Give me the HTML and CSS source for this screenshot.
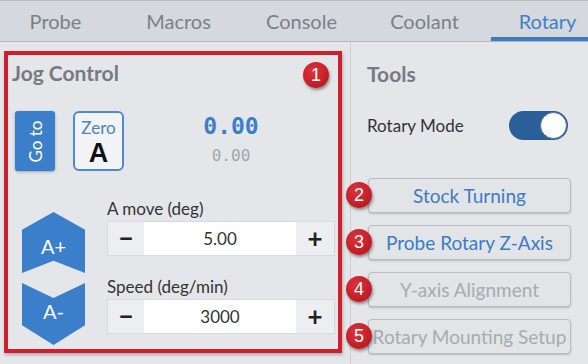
FILE: index.html
```html
<!DOCTYPE html>
<html lang="en">
<head>
  <meta charset="UTF-8">
  <title>Rotary</title>
  <link rel="stylesheet" href="styles.css">
</head>
<body>
  <div class="tabs">
    <div class="tab">Probe</div>
    <div class="tab">Macros</div>
    <div class="tab">Console</div>
    <div class="tab">Coolant</div>
    <div class="tab active">Rotary</div>
  </div>

  <div class="main">
    <div class="jog">
      <span class="badge badge-1">1</span>
      <div class="panel-title">Jog Control</div>

      <div class="jog-top">
        <button class="goto-btn"><span>Go to</span></button>
        <button class="zero-btn">
          <span class="zero-label">Zero</span>
          <span class="zero-axis">A</span>
        </button>
        <div class="readout">
          <div class="readout-main">0.00</div>
          <div class="readout-sub">0.00</div>
        </div>
      </div>

      <div class="jog-bottom">
        <div class="jog-arrows">
          <button class="arrow arrow-up">A+</button>
          <button class="arrow arrow-down">A-</button>
        </div>
        <div class="jog-fields">
          <label class="field-label">A move (deg)</label>
          <div class="stepper">
            <span class="step">&minus;</span>
            <span class="step-value">5.00</span>
            <span class="step plus">+</span>
          </div>
          <label class="field-label second">Speed (deg/min)</label>
          <div class="stepper">
            <span class="step">&minus;</span>
            <span class="step-value">3000</span>
            <span class="step plus">+</span>
          </div>
        </div>
      </div>
    </div>

    <div class="divider"></div>

    <div class="tools">
      <div class="panel-title">Tools</div>
      <div class="mode-row">
        <span>Rotary Mode</span>
        <span class="toggle"><span class="knob"></span></span>
      </div>
      <div class="tool-list">
        <div class="tool-row">
          <span class="badge">2</span>
          <button class="tool-btn">Stock Turning</button>
        </div>
        <div class="tool-row">
          <span class="badge">3</span>
          <button class="tool-btn">Probe Rotary Z-Axis</button>
        </div>
        <div class="tool-row">
          <span class="badge">4</span>
          <button class="tool-btn disabled">Y-axis Alignment</button>
        </div>
        <div class="tool-row">
          <span class="badge">5</span>
          <button class="tool-btn disabled">Rotary Mounting Setup</button>
        </div>
      </div>
    </div>
  </div>
</body>
</html>
```

FILE: styles.css
```css
* {
  box-sizing: border-box;
}
body {
  margin: 0;
  width: 588px;
  height: 364px;
  overflow: hidden;
  font-family: Lato, "Open Sans", sans-serif;
  background: #e4e6ea;
  color: #333;
}
button {
  font-family: inherit;
  border: none;
  padding: 0;
  cursor: pointer;
}

/* tabs */
.tabs {
  display: flex;
  height: 42px;
  background: #d5d8dd;
  border-top: 1px solid #b9bdc3;
  border-bottom: 1px solid #b3b7bd;
}
.tab {
  flex: 0 0 123px;
  line-height: 40px;
  text-align: center;
  font-size: 20px;
  color: #7c8087;
  position: relative;
}
.tab:first-child {
  margin-left: -6px;
}
.tab.active {
  color: #3f80c6;
}
.tab.active::after {
  content: "";
  position: absolute;
  left: 5px;
  right: 0;
  bottom: 0;
  height: 4px;
  background: #3a7dc4;
}

.main {
  display: flex;
  height: 322px;
}

/* jog control */
.jog {
  position: relative;
  width: 338px;
  height: 302px;
  margin: 9px 0 0 4px;
  border: 4px solid #cf1f2a;
  box-shadow: 1px 2px 3px rgba(0,0,0,0.25);
  padding: 6px 0 0 4px;
}
.panel-title {
  font-size: 21px;
  font-weight: bold;
  line-height: 24px;
  color: #777b81;
}
.jog-top {
  display: flex;
  align-items: flex-start;
  margin: 26px 0 0 3px;
}
.goto-btn {
  width: 40px;
  height: 60px;
  background: #3b7fca;
  color: #fff;
  border-radius: 3px;
  box-shadow: 0 1px 3px rgba(0,0,0,0.3);
  display: flex;
  align-items: center;
  justify-content: center;
}
.goto-btn span {
  display: block;
  transform: rotate(-90deg);
  white-space: nowrap;
  font-size: 17px;
}
.zero-btn {
  width: 51px;
  height: 60px;
  margin-left: 18px;
  border: 2px solid #4a8bd2;
  border-radius: 6px;
  background: #f2f3f6;
  display: flex;
  flex-direction: column;
  align-items: center;
}
.zero-label {
  font-size: 17px;
  line-height: 20px;
  margin-top: 5px;
  color: #4a84c4;
}
.zero-axis {
  font-size: 27px;
  font-weight: bold;
  line-height: 30px;
  color: #111;
  font-family: "Liberation Sans", sans-serif;
}
.readout {
  flex: 1;
  text-align: center;
  font-family: "DejaVu Sans Mono", monospace;
  padding-top: 1px;
}
.readout-main {
  font-size: 23px;
  line-height: 28px;
  font-weight: bold;
  color: #3b7fca;
}
.readout-sub {
  margin-top: 6px;
  font-size: 16px;
  line-height: 20px;
  color: #a2a6ab;
}

.jog-bottom {
  display: flex;
  margin-top: 27px;
}
.jog-arrows {
  display: flex;
  flex-direction: column;
  gap: 10px;
  margin: 14px 0 0 10px;
}
.arrow {
  width: 63px;
  background: #3b7fca;
  color: #fff;
  font-size: 20px;
}
.arrow-up {
  height: 61px;
  padding-top: 6px;
  clip-path: polygon(50% 0, 100% 29%, 100% 100%, 50% 80%, 0 100%, 0 29%);
}
.arrow-down {
  height: 62px;
  padding-bottom: 6px;
  clip-path: polygon(0 0, 50% 24%, 100% 0, 100% 68%, 50% 100%, 0 68%);
}
.jog-fields {
  width: 228px;
  margin-left: 22px;
}
.field-label {
  display: block;
  font-size: 17px;
  line-height: 22px;
  margin-bottom: 1px;
  color: #333;
}
.field-label.second {
  margin-top: 20px;
}
.stepper {
  display: flex;
  height: 35px;
  border: 1px solid #d6d9dd;
  background: #eceef1;
}
.step {
  width: 36px;
  text-align: center;
  font-size: 26px;
  font-weight: bold;
  line-height: 32px;
  color: #222;
}
.step.plus {
  width: 38px;
  margin-left: auto;
}
.step-value {
  flex: 1;
  background: #fff;
  text-align: center;
  font-size: 17px;
  line-height: 33px;
}

.divider {
  width: 1px;
  margin-left: 8px;
  background: #cbced3;
}

/* tools */
.tools {
  width: 220px;
  padding: 20px 0 0 16px;
}
.mode-row {
  display: flex;
  align-items: center;
  justify-content: space-between;
  width: 201px;
  margin-top: 25px;
  font-size: 17px;
  color: #333;
}
.toggle {
  width: 59px;
  height: 29px;
  border-radius: 15px;
  background: #2b5f99;
  display: flex;
  justify-content: flex-end;
  padding: 1px;
}
.knob {
  width: 27px;
  height: 27px;
  border-radius: 50%;
  background: #fff;
  border: 1px solid #56708e;
}
.tool-list {
  display: flex;
  flex-direction: column;
  gap: 12px;
  margin-top: 38px;
}
.tool-row {
  position: relative;
  margin-left: 1px;
}
.tool-btn {
  width: 203px;
  height: 35px;
  border: 1px solid #b9bdc3;
  border-radius: 4px;
  background: #e2e4e8;
  box-shadow: 0 1px 2px rgba(0,0,0,0.2);
  color: #3b7cc4;
  font-size: 19px;
  white-space: nowrap;
}
.tool-btn.disabled {
  color: #a7abb1;
}

/* callout badges */
.badge {
  position: absolute;
  z-index: 1;
  width: 26px;
  height: 26px;
  border-radius: 50%;
  background: radial-gradient(circle at 40% 35%, #dd333b, #b3111a);
  box-shadow: 1px 2px 3px rgba(0,0,0,0.4);
  color: #fff;
  font-family: "Liberation Sans", sans-serif;
  font-size: 18px;
  line-height: 26px;
  text-align: center;
  left: -22px;
  top: 4px;
}
.badge-1 {
  left: 295px;
  top: 7px;
}
```
